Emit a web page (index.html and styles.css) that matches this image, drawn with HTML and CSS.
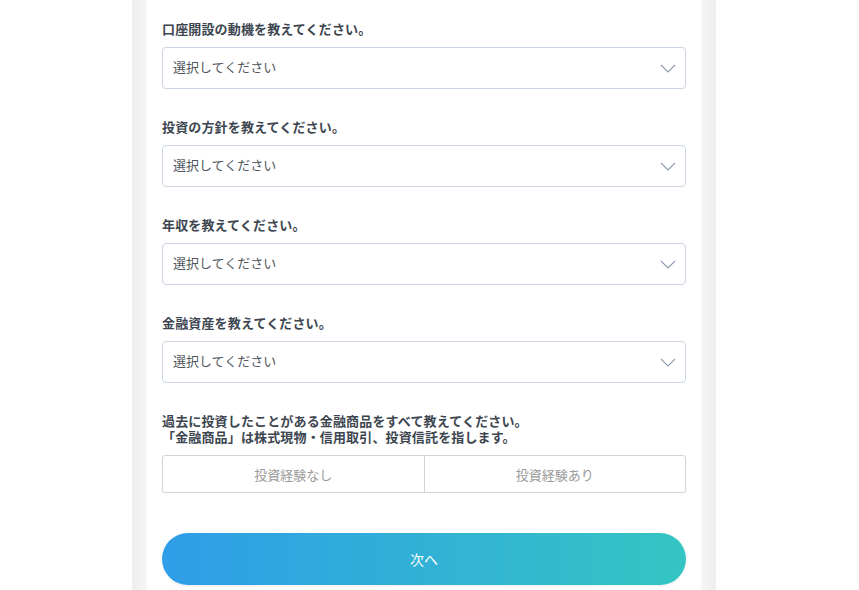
FILE: index.html
```html
<!DOCTYPE html>
<html lang="ja">
<head>
<meta charset="utf-8">
<link rel="stylesheet" href="styles.css">
</head>
<body>
<div class="frame">
  <div class="card">
    <div class="group">
      <div class="label">口座開設の動機を教えてください。</div>
      <div class="select"><span>選択してください</span><svg class="chev" width="16" height="9" viewBox="0 0 16 9"><path d="M1 1 L8 8 L15 1" fill="none" stroke="#8d9db2" stroke-width="1.1"/></svg></div>
    </div>
    <div class="group">
      <div class="label">投資の方針を教えてください。</div>
      <div class="select"><span>選択してください</span><svg class="chev" width="16" height="9" viewBox="0 0 16 9"><path d="M1 1 L8 8 L15 1" fill="none" stroke="#8d9db2" stroke-width="1.1"/></svg></div>
    </div>
    <div class="group">
      <div class="label">年収を教えてください。</div>
      <div class="select"><span>選択してください</span><svg class="chev" width="16" height="9" viewBox="0 0 16 9"><path d="M1 1 L8 8 L15 1" fill="none" stroke="#8d9db2" stroke-width="1.1"/></svg></div>
    </div>
    <div class="group">
      <div class="label">金融資産を教えてください。</div>
      <div class="select"><span>選択してください</span><svg class="chev" width="16" height="9" viewBox="0 0 16 9"><path d="M1 1 L8 8 L15 1" fill="none" stroke="#8d9db2" stroke-width="1.1"/></svg></div>
    </div>
    <div class="group">
      <div class="label multi">
        <div class="line">過去に投資したことがある金融商品をすべて教えてください。</div>
        <div class="line">「金融商品」は株式現物・信用取引、投資信託を指します。</div>
      </div>
      <div class="toggle">
        <div class="opt">投資経験なし</div>
        <div class="opt">投資経験あり</div>
      </div>
    </div>
    <div class="next">次へ</div>
  </div>
</div>
</body>
</html>
```
FILE: styles.css
```css
html, body {
  margin: 0;
  padding: 0;
  background: #ffffff;
  font-family: "Noto Sans CJK JP", "Noto Sans", sans-serif;
}
.frame {
  width: 584px;
  margin-left: 132px;
  background: linear-gradient(to right, #eeeeee 0, #f6f6f6 15px, #f6f6f6 569px, #eeeeee 584px);
  padding: 0 15px;
  box-sizing: border-box;
  min-height: 590px;
}
.card {
  background: #ffffff;
  padding: 21px 15px 20px;
  min-height: 590px;
  box-sizing: border-box;
}
.group {
  margin-bottom: 30px;
}
.label {
  font-size: 13px;
  line-height: 16px;
  font-weight: bold;
  color: #3d4650;
  margin-bottom: 10px;
  white-space: nowrap;
  letter-spacing: 0.15px;
}
.line {
  height: 16px;
}
.select {
  height: 42px;
  box-sizing: border-box;
  border: 1px solid #cbd4e1;
  border-radius: 4px;
  display: flex;
  align-items: center;
  justify-content: space-between;
  padding: 0 9px 0 10px;
  font-size: 13px;
  line-height: 16px;
  color: #50565c;
}
.select span {
  margin-top: -2px;
}
.chev {
  display: block;
}
.toggle {
  display: flex;
  height: 38px;
  box-sizing: border-box;
  border: 1px solid #d3d3d3;
  border-radius: 3px;
}
.opt {
  flex: 1;
  display: flex;
  align-items: center;
  justify-content: center;
  font-size: 13px;
  color: #9a9a9a;
}
.opt + .opt {
  border-left: 1px solid #d3d3d3;
}
.next {
  margin-top: 40px;
  height: 52px;
  border-radius: 26px;
  background: linear-gradient(to right, #2f9de8, #34c5c3);
  color: #ffffff;
  font-size: 14px;
  display: flex;
  align-items: center;
  justify-content: center;
  box-shadow: 0 1px 3px rgba(0,0,0,0.08);
}
```
